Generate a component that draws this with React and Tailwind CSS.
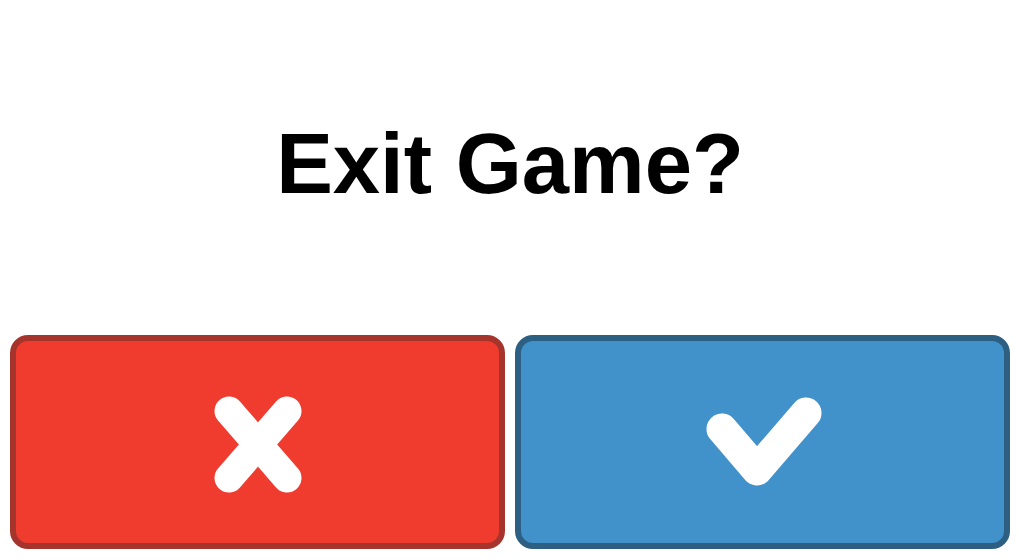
const XIcon = () => (
  <svg width="120" height="120" viewBox="0 0 120 120" fill="none">
    <path d="M31 29 L89 96 M89 29 L31 96" stroke="white" strokeWidth="29" strokeLinecap="round" />
  </svg>
);

const CheckIcon = () => (
  <svg width="120" height="120" viewBox="0 0 120 120" fill="none">
    <path d="M19 47 L54 88 L103 31" stroke="white" strokeWidth="31" strokeLinecap="round" strokeLinejoin="round" />
  </svg>
);

export default function App() {
  return (
    <div className="w-[1020px] h-[560px] bg-white flex flex-col">
      {/* Title */}
      <div className="flex-1 flex items-center justify-center pb-[8px]">
        <h1
          className="text-[85px] font-bold text-black leading-none"
          style={{ fontFamily: "'Liberation Sans', Arial, sans-serif" }}
        >
          Exit Game?
        </h1>
      </div>

      {/* Buttons */}
      <div className="flex gap-[10px] px-[10px] pb-[11px] h-[225px]">
        <button className="flex-1 flex items-center justify-center rounded-[18px] border-[6px] border-[#a5352c] bg-[#f03c2e]">
          <XIcon />
        </button>
        <button className="flex-1 flex items-center justify-center rounded-[18px] border-[6px] border-[#2c5f82] bg-[#4191ca]">
          <CheckIcon />
        </button>
      </div>
    </div>
  );
}
